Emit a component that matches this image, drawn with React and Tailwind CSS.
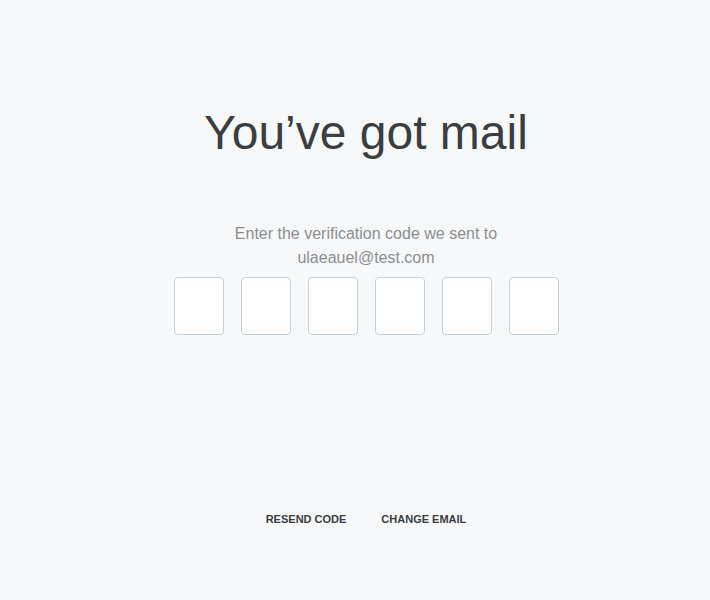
export default function App() {
    return (
        <div
            className="min-h-[600px] w-full bg-[#f7f8fa] flex flex-col items-center pl-[22px]"
            style={{ fontFamily: '"Liberation Sans", Arial, sans-serif' }}
        >
            {/* Title */}
            <h1 className="mt-[109px] text-[48px] leading-[48px] text-[#3b3e41] font-normal">
                You’ve got mail
            </h1>

            {/* Subtitle */}
            <p className="mt-[65px] text-[16px] leading-[24px] text-[#8b8e91] text-center">
                Enter the verification code we sent to
                <br />
                ulaeauel@test.com
            </p>

            {/* Code inputs */}
            <div className="mt-[7px] flex gap-[17px]">
                {[0, 1, 2, 3, 4, 5].map((i) => (
                    <input
                        key={i}
                        type="text"
                        maxLength={1}
                        className="w-[50px] h-[58px] bg-white border border-[#c5cfd8] rounded-[4px] outline-none text-center text-xl"
                    />
                ))}
            </div>

            {/* Actions */}
            <div className="mt-[176px] flex gap-[35px] text-[11px] leading-[16px] font-bold text-[#3a3d40]">
                <button className="uppercase">Resend code</button>
                <button className="uppercase">Change email</button>
            </div>
        </div>
    );
}
